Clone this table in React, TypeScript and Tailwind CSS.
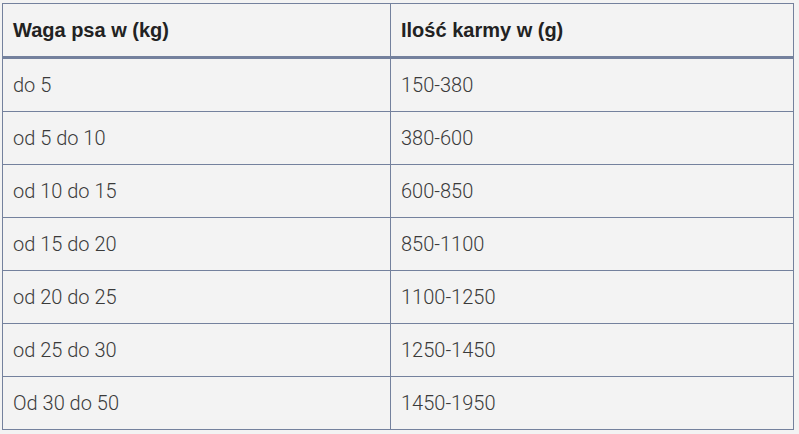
const rows: [string, string][] = [
  ["do 5", "150-380"],
  ["od 5 do 10", "380-600"],
  ["od 10 do 15", "600-850"],
  ["od 15 do 20", "850-1100"],
  ["od 20 do 25", "1100-1250"],
  ["od 25 do 30", "1250-1450"],
  ["Od 30 do 50", "1450-1950"],
];

export default function App() {
  return (
    <div className="min-h-screen bg-[#f3f3f3] pl-[2px] pt-[3px] font-['Liberation_Sans',Arial,sans-serif]">
      <div className="w-[792px] border border-[#74819d]">
        <div className="flex h-[55px] border-b-[3px] border-[#74819d] text-[20px] font-bold text-[#222]">
          <div className="flex w-[388px] items-center border-r border-[#74819d] pl-[10px]">
            Waga psa w (kg)
          </div>
          <div className="flex flex-1 items-center pl-[10px]">Ilość karmy w (g)</div>
        </div>
        {rows.map(([w, g], i) => (
          <div
            key={w}
            className={`flex font-['Roboto',sans-serif] text-[20px] font-light text-[#3a3a3a] ${
              i < rows.length - 1 ? "h-[53px] border-b border-[#74819d]" : "h-[52px]"
            }`}
          >
            <div className="flex w-[388px] items-center border-r border-[#74819d] pl-[10px]">{w}</div>
            <div className="flex flex-1 items-center pl-[10px]">{g}</div>
          </div>
        ))}
      </div>
    </div>
  );
}
